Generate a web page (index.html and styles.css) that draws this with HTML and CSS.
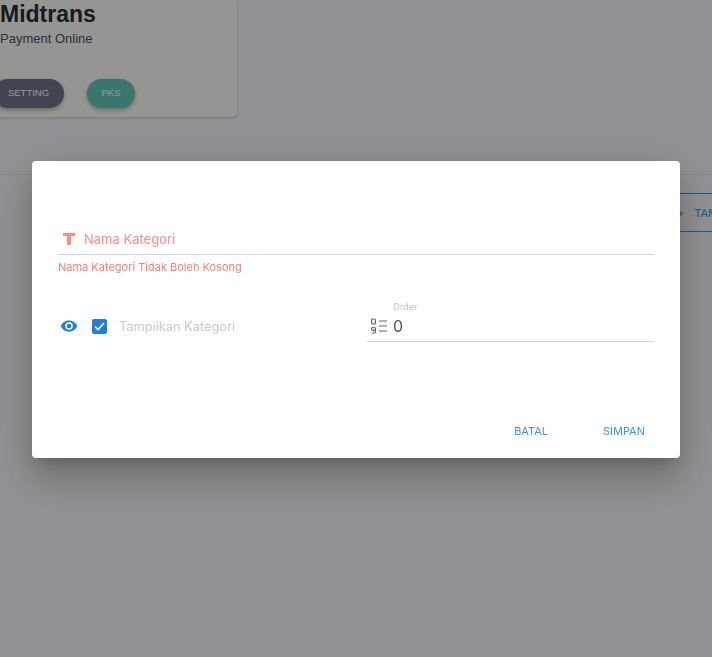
FILE: index.html
```html
<!DOCTYPE html>
<html lang="en">
<head>
    <meta charset="UTF-8">
    <title>Kategori</title>
    <link rel="stylesheet" href="styles.css">
</head>
<body>

    <div class="page">
        <div class="card">
            <h1>Midtrans</h1>
            <p>Payment Online</p>
            <div class="card-actions">
                <button class="pill pill-dark">SETTING</button>
                <button class="pill pill-green">PKS</button>
            </div>
        </div>
        <div class="toolbar">
            <button class="add-btn"><span class="plus">+</span>TAMBAH</button>
        </div>
    </div>

    <div class="overlay">
        <div class="dialog">
            <div class="field-name">
                <div class="name-row">
                    <svg class="icon-t" width="14" height="14" viewBox="0 0 14 14"><path d="M1 1h12v3H9v9H5V4H1z" fill="#ff8a8a"/></svg>
                    <span>Nama Kategori</span>
                </div>
                <div class="error">Nama Kategori Tidak Boleh Kosong</div>
            </div>

            <div class="options">
                <div class="show-row">
                    <svg class="icon-eye" width="18" height="18" viewBox="0 0 24 24"><path d="M12 4.500C7 4.500 2.700 7.600 1 12c1.700 4.400 6 7.500 11 7.500s9.300-3.100 11-7.500c-1.700-4.400-6-7.500-11-7.500zM12 17a5 5 0 1 1 0-10 5 5 0 0 1 0 10zm0-8a3 3 0 1 0 0 6 3 3 0 0 0 0-6z" fill="#1e7fd6"/></svg>
                    <span class="checkbox">
                        <svg width="11" height="9" viewBox="0 0 11 9"><path d="M1 4.500l3 3 6-6.500" fill="none" stroke="#fff" stroke-width="1.600"/></svg>
                    </span>
                    <span class="show-label">Tampilkan Kategori</span>
                </div>
                <div class="order">
                    <svg width="18" height="16" viewBox="0 0 18 16">
                        <g fill="none" stroke="#666" stroke-width="1.200">
                            <rect x="1.600" y="1" width="3.800" height="5" rx="1"/>
                            <rect x="1.600" y="9.500" width="3.800" height="2.800" rx="1"/>
                            <path d="M5.400 11v3a1 1 0 0 1-1 1H1.600"/>
                            <path d="M9 3h8M9 8h8M9 13h8"/>
                        </g>
                    </svg>
                    <div class="order-input">
                        <label>Order</label>
                        <span>0</span>
                    </div>
                </div>
            </div>

            <div class="dialog-actions">
                <button class="text-btn">BATAL</button>
                <button class="text-btn">SIMPAN</button>
            </div>
        </div>
    </div>

</body>
</html>
```

FILE: styles.css
```css
html, body {
    margin: 0;
    padding: 0;
    height: 100%;
    overflow: hidden;
    font-family: Inter, "Liberation Sans", sans-serif;
    background-color: #f7f9fd;
}

button {
    font-family: inherit;
    border: none;
    cursor: pointer;
}

.page {
    height: 100%;
}

.card {
    width: 237px;
    height: 117px;
    box-sizing: border-box;
    padding-top: 1px;
    background-color: #fdfdfb;
    border-radius: 0 0 4px 0;
    box-shadow: 0 1px 3px rgba(0, 0, 0, 0.2);
}

.card h1 {
    margin: 0;
    font-family: "Liberation Sans", Arial, sans-serif;
    font-size: 23px;
    line-height: 27px;
    font-weight: bold;
    color: #2b2f36;
}

.card p {
    margin: 2px 0 0;
    font-family: "Liberation Sans", Arial, sans-serif;
    font-size: 13px;
    line-height: 18px;
    color: #44546a;
}

.card-actions {
    display: flex;
    gap: 23px;
    margin: 31px 0 0 -7px;
}

.pill {
    height: 29px;
    padding: 0 0 2px;
    border-radius: 15px;
    font-family: "Liberation Sans", Arial, sans-serif;
    font-size: 9.500px;
    color: #fff;
    box-shadow: 0 2px 4px rgba(0, 0, 0, 0.3);
}

.pill-dark {
    width: 71px;
    background-color: #73748a;
}

.pill-green {
    width: 48px;
    background-color: #62c9b8;
}

.toolbar {
    margin-top: 57px;
    padding-top: 18px;
    height: 38px;
    border-top: 1px solid #e4e6ea;
    display: flex;
    justify-content: flex-end;
}

.add-btn {
    width: 60px;
    height: 39px;
    margin-right: -25px;
    padding: 0;
    display: flex;
    align-items: center;
    gap: 10px;
    background: none;
    border-top: 1px solid #3f93e0;
    border-bottom: 1px solid #3f93e0;
    font-size: 11px;
    color: #3f93e0;
    white-space: nowrap;
}

.plus {
    font-size: 11px;
}

.overlay {
    position: fixed;
    top: 0;
    left: 0;
    right: 0;
    bottom: 0;
    padding-bottom: 38px;
    display: flex;
    align-items: center;
    justify-content: center;
    background-color: rgba(0, 0, 0, 0.41);
}

.dialog {
    width: 648px;
    height: 297px;
    box-sizing: border-box;
    padding: 62px 26px 0;
    display: flex;
    flex-direction: column;
    background-color: #fff;
    border-radius: 4px;
    box-shadow: 0 11px 15px -7px rgba(0, 0, 0, 0.2), 0 24px 38px 3px rgba(0, 0, 0, 0.14), 0 9px 46px 8px rgba(0, 0, 0, 0.12);
}

.name-row {
    height: 32px;
    box-sizing: border-box;
    padding-left: 4px;
    display: flex;
    align-items: center;
    gap: 8px;
    border-bottom: 1px solid #d6d6d6;
    font-size: 13px;
    color: #ff8a8a;
}

.error {
    margin-top: 5px;
    font-size: 11px;
    line-height: 14px;
    color: #ff7b7b;
}

.options {
    margin-top: 28px;
    display: flex;
    justify-content: space-between;
    align-items: flex-end;
}

.show-row {
    display: flex;
    align-items: center;
    height: 34px;
    padding-top: 2px;
    box-sizing: border-box;
    font-size: 12.800px;
    color: #c9c9c9;
}

.icon-eye {
    margin-left: 2px;
}

.checkbox {
    width: 15px;
    height: 15px;
    margin-left: 14px;
    display: flex;
    align-items: center;
    justify-content: center;
    background-color: #1e7fd6;
    border-radius: 2px;
}

.show-label {
    margin-left: 12px;
}

.order {
    width: 287px;
    height: 40px;
    box-sizing: border-box;
    padding: 0 0 2px 3px;
    display: flex;
    align-items: flex-end;
    gap: 5px;
    border-bottom: 1px solid #d6d6d6;
}

.order svg {
    margin-bottom: 5px;
}

.order-input {
    display: flex;
    flex-direction: column;
}

.order-input label {
    font-size: 9px;
    line-height: 11px;
    color: #c4c4c4;
}

.order-input span {
    margin-top: 2px;
    font-size: 16px;
    line-height: 25px;
    color: #555;
}

.dialog-actions {
    margin-top: auto;
    padding-bottom: 19px;
    display: flex;
    justify-content: flex-end;
    gap: 55px;
    margin-right: 9px;
}

.text-btn {
    padding: 0;
    background: none;
    font-size: 11px;
    line-height: 16px;
    color: #3f93e0;
}
```
